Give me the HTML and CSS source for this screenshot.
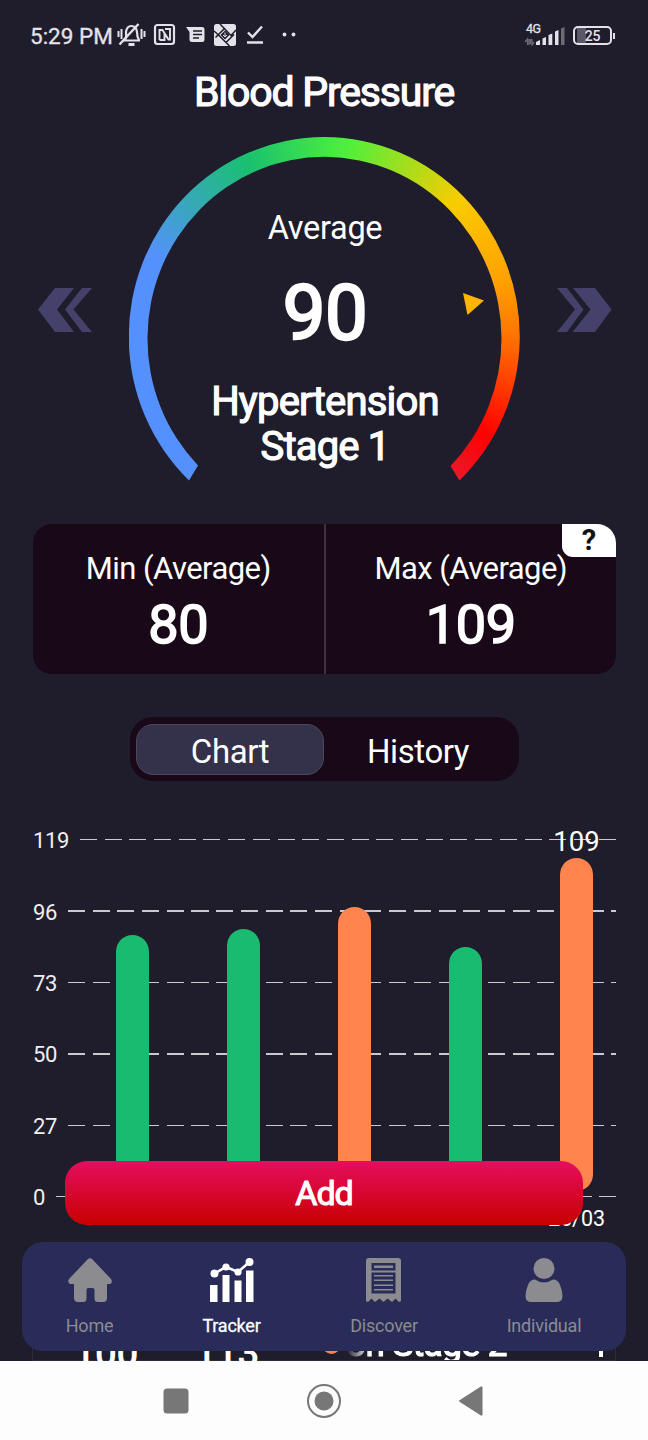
FILE: index.html
```html
<!DOCTYPE html>
<html lang="en">
<head>
    <meta charset="UTF-8">
    <meta name="viewport" content="width=device-width, initial-scale=1.0">
    <title>Blood Pressure</title>
    <link rel="stylesheet" href="styles.css">
</head>
<body>
    <div class="app">
        <div class="status-bar">
            <span class="time">5:29 PM</span>
            <svg class="status-icons" width="184" height="26" viewBox="0 0 184 26">
                <g fill="none" stroke="#e4e2e8" stroke-width="2.200">
                    <path d="M6 18.500h17M8 18c2-3 1-5 1-8 1-8 10-8 11 0 0 3 0 5 2 8"/>
                    <path d="M2.500 22.500L21.500 2" stroke-width="2.400"/>
                    <path d="M1.500 9v6M4.500 7v10M24.500 7v10M27.500 9v6" stroke-width="2"/>
                    <path d="M11.500 22.500h6" stroke-width="3"/>
                    <rect x="38" y="3" width="19" height="19" rx="2.500"/>
                    <path d="M42.500 18V8h3l6 9.500h1.500V7h-5M42.500 18h5V11" stroke-width="1.900"/>
                </g>
                <g fill="#e4e2e8">
                    <path d="M69 5h16q2.500 0 2.500 2.500v10q0 2.500-2.500 2.500H75q-2.500 0-2.500-2.500V10z"/>
                    <rect x="97" y="2" width="22" height="22" rx="2.500"/>
                    <circle cx="167.500" cy="12.500" r="1.900"/>
                    <circle cx="176.500" cy="12.500" r="1.900"/>
                </g>
                <g fill="none" stroke="#1f1c2b" stroke-width="1.500">
                    <path d="M76 9h9M76 12.500h9M76 16h6"/>
                    <path d="M97 9l4.500 4 11 11M103 2l11 11.500 5-5.500M108 6l-9.500 9.500M117 12.500L108.500 21"/>
                </g>
                <path d="M108 8.500l4.500 4.500-4.500 4.500-4.500-4.500z" fill="#1f1c2b"/>
                <path d="M108 10.500v4.500M106 13l2 2 2-2" fill="none" stroke="#e4e2e8" stroke-width="1"/>
                <path d="M131 10.500l4.500 4.500L145 4.500M130 20.500h16" fill="none" stroke="#e4e2e8" stroke-width="2.400"/>
            </svg>
            <div class="status-right">
                <div class="network">
                    <span>4G</span>
                    <svg width="42" height="20" viewBox="0 0 42 20">
                        <path d="M3.500 19v-6l-2.500 3M5 13v6M8 13v6l2-3M6.500 13v5" fill="none" stroke="#6e6b77" stroke-width="1.300"/>
                        <g fill="#e4e2e8">
                            <path d="M12 16l4-2v5h-4zM18.500 12.500l3.500-1.500v8h-3.500zM24.500 9l3.800-1.500V19h-3.800zM31 5.500L34.500 4v15H31z"/>
                            <path d="M37 2.500L40.500 1v18H37z" fill="#6e6b77"/>
                        </g>
                    </svg>
                </div>
                <div class="battery"><span>25</span></div>
            </div>
        </div>

        <h1>Blood Pressure</h1>

        <div class="gauge-row">
            <svg class="arrow" width="56" height="46" viewBox="0 0 56 46">
                <path d="M0 22.500L17 1h19L19 22.500 36 45H17zM27 22.500L44 1h10L35.500 22.500 54 45H44z"/>
            </svg>
            <div class="gauge">
                <div class="gauge-ring"></div>
                <svg class="gauge-pointer" width="22" height="22" viewBox="0 0 22 22">
                    <path d="M0 0l21 7.500L4.500 22z"/>
                </svg>
                <div class="gauge-label">Average</div>
                <div class="gauge-value">90</div>
                <div class="gauge-result">Hypertension<br>Stage 1</div>
            </div>
            <svg class="arrow" width="56" height="46" viewBox="0 0 56 46">
                <path d="M55.500 22.500L39 1H17l17.500 21.500L16.500 45H39zM27.500 22.500L11 1H1l18 21.500L1 45h10z"/>
            </svg>
        </div>

        <div class="stats">
            <div class="stat">
                <div class="stat-label">Min (Average)</div>
                <div class="stat-value">80</div>
            </div>
            <div class="stat">
                <div class="stat-label">Max (Average)</div>
                <div class="stat-value">109</div>
            </div>
            <div class="help">?</div>
        </div>

        <div class="tabs">
            <div class="tab active">Chart</div>
            <div class="tab">History</div>
        </div>

        <div class="chart">
            <div class="grid-row"><span>119</span><i></i></div>
            <div class="grid-row"><span>96</span><i></i></div>
            <div class="grid-row"><span>73</span><i></i></div>
            <div class="grid-row"><span>50</span><i></i></div>
            <div class="grid-row"><span>27</span><i></i></div>
            <div class="grid-row"><span>0</span><i></i></div>
            <div class="bars">
                <div class="bar-col"><div class="bar normal" style="height: 256px"></div></div>
                <div class="bar-col"><div class="bar normal" style="height: 262px"></div></div>
                <div class="bar-col"><div class="bar high" style="height: 284px"></div></div>
                <div class="bar-col"><div class="bar normal" style="height: 244px"></div></div>
                <div class="bar-col">
                    <span class="bar-value">109</span>
                    <div class="bar high" style="height: 333px"></div>
                    <span class="bar-date">26/03</span>
                </div>
            </div>
        </div>

        <div class="record">
            <span class="record-num">100</span>
            <span class="record-num">113</span>
            <span class="record-dot"></span>
            <span class="record-type">on Stage 2</span>
            <span class="record-more"></span>
        </div>

        <button class="add-btn">Add</button>

        <nav class="tab-bar">
            <div class="nav-item">
                <svg width="44" height="44" viewBox="0 0 44 44">
                    <path d="M19.500 1.500q2.500-2.500 5 0L43 21q2 3-.5 5H39v14q0 4-4 4h-5q-3.500 0-3.500-3.500V32q0-2-2-2h-4q-2 0-2 2v8.500q0 3.500-3.500 3.500h-5q-4 0-4-4V26H2q-3-2-1-5z"/>
                </svg>
                <span>Home</span>
            </div>
            <div class="nav-item active">
                <svg width="44" height="44" viewBox="0 0 44 44">
                    <path d="M0 27h7.500v17H0zM12.500 17h7v27h-7zM24.500 22.500h7V44h-7zM36 12.500h7.500V44H36z"/>
                    <path d="M4.500 15.500L16 9l12 5L39.500 4" fill="none" stroke="#fff" stroke-width="2.500"/>
                    <circle cx="4.500" cy="15.500" r="4"/>
                    <circle cx="16" cy="9" r="3.600"/>
                    <circle cx="28" cy="14" r="3.600"/>
                    <circle cx="39.500" cy="4" r="4"/>
                </svg>
                <span>Tracker</span>
            </div>
            <div class="nav-item">
                <svg width="36" height="44" viewBox="0 0 36 44">
                    <path fill-rule="evenodd" d="M3 0h29q3 0 3 3v40l-2 1-3.500-3.500L26 44l-4.500-3.500-4 3.500-4-3.500L9 44l-3.500-3.500L2 44l-2-1V3q0-3 3-3zM5.500 5v7.500h24V5zM5.500 14.500v21h24v-21z"/>
                    <path d="M8 7.500h19V10H8zM8 17h19v1.500H8zM8 21.500h19V23H8zM8 26.500h19V28H8zM8 31h19v1.500H8z"/>
                </svg>
                <span>Discover</span>
            </div>
            <div class="nav-item">
                <svg width="38" height="44" viewBox="0 0 38 44">
                    <ellipse cx="19" cy="10.500" rx="10.500" ry="10.500"/>
                    <path d="M10 21.500q9 6 18 0 5 0 7 5.500 2.500 6 2.500 11 0 6-6 6h-25q-6 0-6-6 0-5 2.500-11 2-5.500 7-5.500z"/>
                </svg>
                <span>Individual</span>
            </div>
        </nav>
    </div>

    <div class="system-nav">
        <svg width="26" height="36" viewBox="0 0 26 36"><rect x=".5" y="5.500" width="25" height="25" rx="3.500"/></svg>
        <svg width="36" height="36" viewBox="0 0 36 36">
            <circle cx="18" cy="18" r="16" fill="none" stroke="#777" stroke-width="2"/>
            <circle cx="18" cy="18" r="9.500"/>
        </svg>
        <svg width="26" height="36" viewBox="0 0 26 36"><path d="M1.500 17.300L22.500 3.700q2-1 2 1v26.600q0 2-2 1L1.500 18.700q-1-.7 0-1.400z"/></svg>
    </div>
</body>
</html>
```
FILE: styles.css
```css
:root {
    --bg: #1f1c2b;
    --card: #180818;
    --green: #18bb70;
    --orange: #ff844e;
    --nav: #292b59;
    --muted: #8c8c90;
}

* {
    box-sizing: border-box;
    margin: 0;
    padding: 0;
}

body {
    width: 648px;
    height: 1440px;
    overflow: hidden;
    background: #fdfdfd;
    font-family: Roboto, "Liberation Sans", sans-serif;
    color: #fff;
}

svg {
    display: block;
    flex: none;
}

.app {
    position: relative;
    height: 1361px;
    overflow: hidden;
    background: var(--bg);
}

/* status bar */
.status-bar {
    display: flex;
    align-items: center;
    height: 68px;
    padding: 4px 36px 0 30px;
    color: #e4e2e8;
}

.time {
    width: 87px;
    font-size: 22.5px;
    white-space: nowrap;
    -webkit-text-stroke: 0.3px;
}

.status-icons {
    margin-top: -2px;
}

.status-right {
    display: flex;
    align-items: center;
    gap: 7px;
    margin-left: auto;
}

.network {
    position: relative;
}

.network span {
    position: absolute;
    left: 2px;
    top: -4px;
    font-size: 12.5px;
    line-height: 14px;
    letter-spacing: -0.5px;
    -webkit-text-stroke: 0.3px;
}

.battery {
    position: relative;
    width: 39px;
    height: 19px;
    margin-top: -1px;
    border: 2px solid #e4e2e8;
    border-radius: 5px;
    font-size: 14px;
    font-weight: 500;
    line-height: 16px;
    text-align: center;
    letter-spacing: -0.3px;
    background: linear-gradient(90deg, #5b5964 9px, transparent 9px) 2px 0 no-repeat;
}

.battery::after {
    content: "";
    position: absolute;
    right: -5px;
    top: 5px;
    width: 2px;
    height: 6px;
    background: #e4e2e8;
}

h1 {
    font-size: 41px;
    font-weight: 400;
    line-height: 48px;
    text-align: center;
    letter-spacing: -1.2px;
    -webkit-text-stroke: 1.2px;
}

/* gauge */
.gauge-row {
    display: flex;
    justify-content: space-between;
    height: 344px;
    margin: 21px 36px 0 38px;
}

.arrow {
    margin-top: 150px;
    fill: #45416a;
}

.gauge {
    position: relative;
    width: 392px;
    padding-top: 71px;
    text-align: center;
}

.gauge-ring {
    position: absolute;
    inset: 0;
    background: conic-gradient(from 180deg at 196px 200px,
        #5590ff 0deg, #5590ff 114deg, #18c070 156deg, #4cf03c 186deg,
        #f8cc00 224deg, #ffb000 242deg, #ffa000 253deg, #ff7600 269deg,
        #ff0000 301deg, #e81a2c 318deg);
    clip-path: path("M60 343.500A195.500 199.400 0 1 1 330.500 343.500L321.500 329A177 181.600 0 1 0 69 328.500Z");
}

.gauge-pointer {
    position: absolute;
    left: 334px;
    top: 156px;
    fill: #ffb400;
}

.gauge-label {
    font-size: 32.5px;
    line-height: 40px;
    letter-spacing: -0.3px;
}

.gauge-value {
    margin-top: 20px;
    font-size: 76px;
    line-height: 90px;
    letter-spacing: -0.5px;
    -webkit-text-stroke: 2.4px;
}

.gauge-result {
    margin-top: 21px;
    font-size: 40px;
    line-height: 45px;
    letter-spacing: -0.8px;
    -webkit-text-stroke: 1.2px;
}

/* min / max */
.stats {
    position: relative;
    display: flex;
    height: 150px;
    margin: 43px 32px 0 33px;
    background: var(--card);
    border-radius: 19px;
    overflow: hidden;
}

.stat {
    flex: 1;
    padding-top: 25px;
    text-align: center;
}

.stat + .stat {
    border-left: 2px solid #3c313f;
}

.stat-label {
    font-size: 31px;
    line-height: 40px;
    letter-spacing: -0.55px;
}

.stat-value {
    margin-top: 6px;
    font-size: 54px;
    line-height: 60px;
    letter-spacing: -0.4px;
    -webkit-text-stroke: 1.6px;
}

.help {
    position: absolute;
    right: 0;
    top: 0;
    width: 54px;
    height: 33px;
    border-radius: 0 0 0 11px;
    background: #fff;
    color: #111;
    font-size: 29px;
    font-weight: 700;
    line-height: 33px;
    text-align: center;
}

/* tabs */
.tabs {
    display: flex;
    width: 389px;
    height: 64px;
    margin: 43px 0 0 130px;
    padding: 7px 7px 6px 6px;
    background: var(--card);
    border-radius: 23px;
}

.tab {
    flex: 1;
    padding-top: 3px;
    border: 1px solid transparent;
    border-radius: 17px;
    font-size: 33px;
    line-height: 48px;
    letter-spacing: -0.4px;
    text-align: center;
}

.tab.active {
    background: #34324a;
    border-color: #4b465c;
}

/* chart */
.chart {
    position: relative;
    margin: 23px 32px 0 33px;
}

.grid-row {
    display: flex;
    align-items: center;
    gap: 11px;
    height: 71.4px;
    font-size: 22px;
    letter-spacing: -0.4px;
    color: #eee;
}

.grid-row span {
    padding-top: 2px;
}

.grid-row i {
    flex: 1;
    height: 1.5px;
    background: repeating-linear-gradient(90deg, #cbc9ce 0 17px, transparent 17px 24.7px);
}

.bars {
    position: absolute;
    left: 44px;
    bottom: 41px;
    display: flex;
    align-items: flex-end;
}

.bar-col {
    position: relative;
    width: 111px;
}

.bar {
    width: 33px;
    margin: 0 auto;
    border-radius: 17px;
}

.bar.normal {
    background: var(--green);
}

.bar.high {
    background: var(--orange);
}

.bar-value {
    display: block;
    font-size: 27.5px;
    line-height: 32px;
    text-align: center;
}

.bar-date {
    position: absolute;
    top: 100%;
    left: 0;
    width: 111px;
    margin-top: 15px;
    font-size: 21.5px;
    line-height: 26px;
    text-align: center;
}

/* first history record, mostly hidden behind the tab bar */
.record {
    display: flex;
    height: 109px;
    margin: 20px 32px 0;
    padding: 69px 12px 0 41px;
    border: 1px solid #2d2a3a;
    border-top: 0;
    -webkit-text-stroke: 1.2px;
}

.record-num {
    width: 121px;
    padding-top: 10px;
    font-size: 38px;
    line-height: 44px;
}

.record-dot {
    width: 17px;
    height: 17px;
    margin: 16px 0 0 7px;
    border-radius: 50%;
    background: var(--orange);
}

.record-type {
    width: 190px;
    margin-left: 6px;
    font-size: 35px;
    line-height: 47px;
    letter-spacing: -0.5px;
    white-space: nowrap;
    -webkit-mask-image: linear-gradient(90deg, transparent 0, #000 24px);
}

.record-more {
    width: 4px;
    height: 36px;
    margin-left: auto;
    background: #fff;
}

.add-btn {
    position: absolute;
    left: 65px;
    top: 1161px;
    width: 518px;
    height: 64px;
    border: 0;
    border-radius: 22px;
    background: linear-gradient(#e60d5f, #c80000);
    color: #fff;
    font: 400 34px/64px Roboto, "Liberation Sans", sans-serif;
    letter-spacing: -1px;
    -webkit-text-stroke: 1.1px;
}

.tab-bar {
    position: absolute;
    left: 22px;
    right: 22px;
    top: 1242px;
    display: flex;
    height: 109px;
    padding-top: 16px;
    background: var(--nav);
    border-radius: 21px;
}

.nav-item {
    display: flex;
    flex-direction: column;
    align-items: center;
    gap: 13px;
    width: 135px;
    color: var(--muted);
    fill: var(--muted);
    font-size: 18px;
    line-height: 22px;
    letter-spacing: -0.2px;
}

.nav-item.active {
    width: 149px;
    color: #fff;
    fill: #fff;
    -webkit-text-stroke: 0.3px;
}

.nav-item:nth-child(3) {
    width: 156px;
}

.nav-item:nth-child(4) {
    width: 164px;
}

/* android navigation */
.system-nav {
    display: flex;
    justify-content: space-between;
    align-items: center;
    height: 79px;
    padding: 0 164px 0 163px;
    fill: #777;
}
```
